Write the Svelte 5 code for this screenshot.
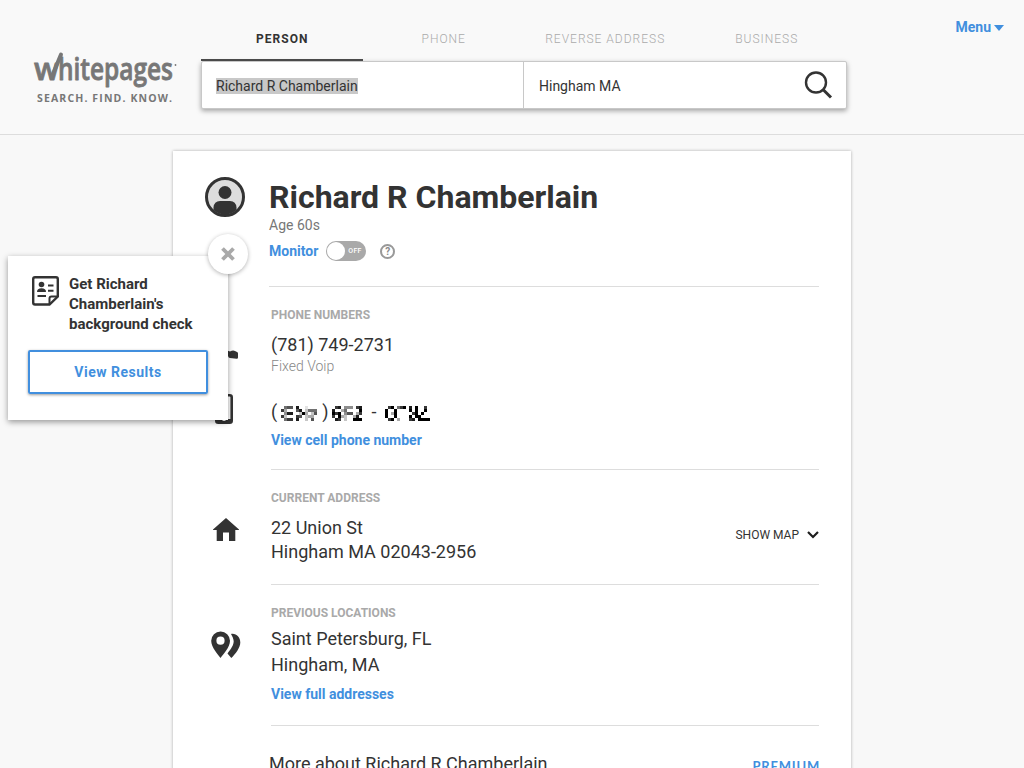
<script lang="ts">
    const tabs = ['Person', 'Phone', 'Reverse Address', 'Business'];

    // Pixelated digits, 0 is blank and 9 is black
    const masked: Record<string, string[]> = {
        area: [
            '056608001000',
            '730006802555',
            '048800293026',
            '720007602330',
            '057708002060',
        ],
        prefix: [
            '0780444078',
            '8003500009',
            '9790466037',
            '7093200380',
            '0870200999',
        ],
        line: [
            '079057908090070',
            '900900009090090',
            '903900000790900',
            '900900009099000',
            '079030007809999',
        ],
    };
</script>

{#snippet digits(rows: string[])}
    <svg class="digits" width={rows[0].length * 3} height="15" shape-rendering="crispEdges">
        {#each rows as row, y}
            {#each row as level, x}
                <rect x={x * 3} y={y * 3} width="3" height="3" fill="#000" fill-opacity={Number(level) / 9} />
            {/each}
        {/each}
    </svg>
{/snippet}

<header>
    <svg class="logo" width="150" height="58" viewBox="0 0 150 58">
        <text class="brand" y="29.500"><tspan x="1" textLength="25" lengthAdjust="spacingAndGlyphs">w</tspan><tspan x="25" textLength="115" lengthAdjust="spacingAndGlyphs">hitepages</tspan></text>
        <path d="M18.500 27.500L28 4.500" />
        <circle cx="142.500" cy="15" r="0.900" />
        <text class="tagline" x="4" y="51.500" textLength="135">SEARCH. FIND. KNOW.</text>
    </svg>
    <div class="finder">
        <nav>
            {#each tabs as tab, i}
                <button class="tab" class:active={i === 0} type="button">{tab}</button>
            {/each}
        </nav>
        <div class="search">
            <div class="field"><span class="selected">Richard R Chamberlain</span></div>
            <div class="field where">
                <span>Hingham MA</span>
                <svg width="30" height="30" viewBox="0 0 30 30" fill="none" stroke="#333">
                    <circle cx="13" cy="12.500" r="10" stroke-width="2.400" />
                    <path d="M20 19.500L28 27.500" stroke-width="3" />
                </svg>
            </div>
        </div>
    </div>
    <button class="menu" type="button">Menu <i></i></button>
</header>

<main>
    <section class="person">
        <svg class="avatar" width="40" height="40" viewBox="0 0 40 40">
            <circle cx="20" cy="20" r="18.500" fill="#ddd" stroke="#333" stroke-width="3" />
            <circle cx="20" cy="15.500" r="6.500" fill="#333" />
            <path d="M8.500 33V30.500Q9 24 15 24H25Q31 24 31.500 30.500V33Q20 42 8.500 33Z" fill="#333" />
        </svg>
        <div class="body">
            <h1>Richard R Chamberlain</h1>
            <div class="age">Age 60s</div>
            <div class="monitor">
                <a href="#monitor">Monitor</a>
                <span class="toggle"><b></b>OFF</span>
                <span class="help">?</span>
            </div>
        </div>
    </section>

    <section class="phones">
        <div class="icons">
            <svg width="28" height="12" viewBox="0 0 28 12">
                <path d="M2 10Q-1 3 5 2Q14 0 20 2.500Q23 1 25 2L27 3Q28 3.300 28 4.500V8.500Q28 10 26.500 9.800L20 9Q18.500 9 18 7L17.500 5Q13 4 9 5L8 9Z" fill="#333" />
            </svg>
            <svg width="18" height="30" viewBox="0 0 18 30">
                <rect x="1.300" y="1.300" width="15.400" height="27.400" rx="2" fill="none" stroke="#333" stroke-width="2.600" />
                <path d="M1 25H17V29H1Z" fill="#333" />
                <path d="M7.500 26.500H10.500" stroke="#fff" />
            </svg>
        </div>
        <div class="body">
            <h2>Phone Numbers</h2>
            <p class="number">(781) 749-2731</p>
            <p class="kind">Fixed Voip</p>
            <p class="number hidden">
                <span>(</span>{@render digits(masked.area)}<span>)</span>{@render digits(masked.prefix)}<span class="dash">-</span>{@render digits(masked.line)}
            </p>
            <a href="#cell">View cell phone number</a>
        </div>
    </section>

    <section class="current">
        <svg class="house" width="26" height="23" viewBox="0 0 26 23">
            <path d="M13 0L26 11.500V12H22.300V23H16V14.500H10V23H3.700V12H0V11.500Z" fill="#333" />
        </svg>
        <div class="body">
            <h2>Current Address</h2>
            <div class="address">
                <p>22 Union St<br />Hingham MA 02043-2956</p>
                <button class="map" type="button">
                    Show map
                    <svg width="12" height="8" viewBox="0 0 12 8">
                        <path d="M1 1L6 6L11 1" fill="none" stroke="#1e1e1e" stroke-width="2.200" />
                    </svg>
                </button>
            </div>
        </div>
    </section>

    <section class="previous">
        <svg class="pins" width="30" height="28" viewBox="0 0 30 28">
            <path fill="#333" fill-rule="evenodd" d="M9.500 0.500A9.300 9.300 0 0 1 19 9.800C19 16 12 24 9.500 27C7 24 0.200 16 0.200 9.800A9.300 9.300 0 0 1 9.500 0.500ZM9.500 5.600A4.100 4.100 0 1 0 9.500 13.800A4.100 4.100 0 1 0 9.500 5.600Z" />
            <path fill="#333" d="M20 3C25 2 29.300 6 29.300 11.500C29.300 16.500 24.500 23 20.300 27L16.500 22.500C18 20 22.500 15.500 22.700 10.500C22.700 8 21.500 5.500 20 3Z" />
        </svg>
        <div class="body">
            <h2>Previous Locations</h2>
            <p>Saint Petersburg, FL<br />Hingham, MA</p>
            <a href="#addresses">View full addresses</a>
        </div>
    </section>

    <div class="more">
        <span>More about Richard R Chamberlain</span>
        <b>PREMIUM</b>
    </div>
</main>

<aside>
    <button class="close" type="button" aria-label="Close">
        <svg width="14" height="14" viewBox="0 0 14 14">
            <path d="M1.500 1.500L12.500 12.500M12.500 1.500L1.500 12.500" stroke="#a9a9a9" stroke-width="3.800" />
        </svg>
    </button>
    <div class="offer">
        <svg width="27" height="30" viewBox="0 0 27 30" fill="none" stroke="#333" stroke-width="2">
            <path d="M3 1.200H24Q25.800 1.200 25.800 3V20.500L17.500 28.500H3Q1.200 28.500 1.200 26.500V3Q1.200 1.200 3 1.200Z" stroke-width="2.400" />
            <path d="M17.500 28V22.500Q17.500 20.500 19.500 20.500H25.500" />
            <circle cx="9.500" cy="8.500" r="2.800" fill="#333" stroke="none" />
            <path d="M5 16Q5 12.300 9.500 12.300Q14 12.300 14 16Z" fill="#333" stroke="none" />
            <path d="M16 9.500H21.500M16 14.800H21.500M5.500 20H14" />
        </svg>
        <strong>Get Richard Chamberlain's background check</strong>
    </div>
    <button class="results" type="button">View Results</button>
</aside>

<style>
    :global(body) {
        background: #f8f8f8;
        color: #333;
        font-family: Roboto, sans-serif;
        height: 768px;
        overflow: hidden;
    }

    h1, h2, p {
        margin: 0;
    }

    svg {
        display: block;
        flex: none;
    }

    a {
        color: #418fde;
        font-size: 14px;
        font-weight: 700;
        line-height: 16px;
        text-decoration: none;
    }

    button {
        font-family: inherit;
        background: none;
        border: none;
        padding: 0;
        cursor: pointer;
    }

    header {
        box-sizing: border-box;
        height: 135px;
        display: flex;
        align-items: flex-start;
        padding: 0 20px 0 33px;
        background: #f9f9f9;
        border-bottom: 1px solid #ddd;
    }

    .logo {
        margin: 50px 18px 0 0;
        fill: #777;
        overflow: visible;

        path {
            stroke: #777;
            stroke-width: 4;
            stroke-linecap: round;
        }
    }

    .brand {
        font: 600 30px "Open Sans", sans-serif;
        stroke: #777;
        stroke-width: 0.8;
        stroke-linejoin: round;
    }

    .tagline {
        font: 700 10.5px "Open Sans", sans-serif;
    }

    .finder {
        width: 646px;
    }

    nav {
        display: grid;
        grid-template-columns: repeat(4, 1fr);
        height: 41px;
        margin-top: 20px;
    }

    .tab {
        box-sizing: border-box;
        padding: 0 0 1px 1px;
        color: #aaa;
        font-size: 12px;
        font-weight: 300;
        letter-spacing: 1px;
        text-transform: uppercase;
        border-bottom: 2px solid transparent;

        &.active {
            color: #333;
            font-weight: 700;
            border-color: #4a4a4a;
        }
    }

    .search {
        box-sizing: border-box;
        display: flex;
        height: 48px;
        background: #fff;
        border: 1px solid #c8c8c8;
        border-radius: 2px;
        box-shadow: 0 2px 5px rgba(0, 0, 0, 0.35);
        font-size: 14px;
    }

    .field {
        box-sizing: border-box;
        width: 321px;
        display: flex;
        align-items: center;
        padding: 2px 14px 0;
    }

    .selected {
        background: #c8c8c8;
    }

    .where {
        justify-content: space-between;
        padding-left: 15px;
        padding-right: 11px;
        border-left: 1px solid #c8c8c8;

        svg {
            margin-top: -3px;
        }
    }

    .menu {
        margin: 19px 0 0 auto;
        display: flex;
        align-items: center;
        gap: 3px;
        color: #418fde;
        font-size: 14px;
        font-weight: 700;

        i {
            border: 5px solid transparent;
            border-top: 6px solid #418fde;
            border-bottom: none;
            margin-top: 2px;
        }
    }

    main {
        box-sizing: border-box;
        width: 678px;
        height: 640px;
        margin: 16px auto 0;
        padding: 0 32px;
        background: #fff;
        box-shadow: 0 0 3px rgba(0, 0, 0, 0.3);
    }

    section {
        display: flex;
    }

    .body {
        box-sizing: border-box;
        margin-left: auto;
        width: 548px;
        border-bottom: 1px solid #ddd;
    }

    .person .body {
        width: 550px;
        height: 136px;
        padding-top: 27px;
    }

    .avatar {
        margin-top: 26px;
    }

    h1 {
        font-size: 32px;
        line-height: 38px;
    }

    .age {
        margin-top: 1px;
        color: #777;
        font-size: 14px;
        line-height: 16px;
    }

    .monitor {
        display: flex;
        align-items: center;
        margin-top: 8px;
    }

    .toggle {
        box-sizing: border-box;
        display: flex;
        align-items: center;
        gap: 3px;
        width: 40px;
        height: 20px;
        margin: 0 14px 0 8px;
        padding-left: 1px;
        border-radius: 10px;
        background: #a9a9a9;
        color: #fff;
        font-size: 7px;
        font-weight: 500;
        letter-spacing: 0.3px;

        b {
            width: 18px;
            height: 18px;
            border-radius: 50%;
            background: #fff;
        }
    }

    .help {
        box-sizing: border-box;
        width: 15px;
        height: 15px;
        border: 2px solid #999;
        border-radius: 50%;
        color: #888;
        font-size: 10px;
        font-weight: 700;
        line-height: 11px;
        text-align: center;
    }

    h2 {
        color: #a9a9a9;
        font-size: 12px;
        line-height: 14px;
        font-weight: 700;
        text-transform: uppercase;
    }

    .body > p, .address p {
        font-size: 18px;
        line-height: 24px;
    }

    .phones .body {
        height: 183px;
        padding-top: 21px;

        h2 {
            margin-bottom: 11px;
        }

        .kind {
            color: #888;
            font-size: 14px;
            font-weight: 300;
            line-height: 18px;
        }
    }

    .icons {
        display: flex;
        flex-direction: column;
        align-items: center;
        margin: 62px 0 0 5px;
        gap: 33px;
    }

    .hidden {
        display: flex;
        align-items: center;
        margin: 25px 0 6px;

        .digits {
            margin: 2px 5px 0 4px;
        }

        .digits:nth-of-type(2) {
            margin-right: 0;
        }

        .dash {
            margin: 0 5px 0 9px;
        }
    }

    .current .body {
        height: 115px;
        padding-top: 21px;
    }

    .house {
        margin: 48px 0 0 8px;
    }

    .address {
        display: flex;
        justify-content: space-between;
        align-items: flex-start;
        margin-top: 11px;
    }

    .map {
        display: flex;
        align-items: center;
        gap: 8px;
        margin-top: 12px;
        color: #333;
        font-size: 12px;
        text-transform: uppercase;
    }

    .previous .body {
        height: 141px;
        padding-top: 21px;

        p {
            line-height: 26px;
            margin: 6px 0 8px;
        }

        a {
            display: block;
        }
    }

    .pins {
        margin: 46px 0 0 6px;
    }

    .more {
        display: flex;
        justify-content: space-between;
        align-items: flex-start;
        margin-left: 64px;
        padding-top: 27px;
        font-size: 18px;
        line-height: 21px;

        b {
            color: #418fde;
            font: 700 13px/16px Lato, sans-serif;
            letter-spacing: 0.8px;
            margin: 5px -1px 0 0;
        }
    }

    aside {
        position: absolute;
        left: 8px;
        top: 256px;
        box-sizing: border-box;
        width: 220px;
        height: 164px;
        padding: 18px 20px;
        background: #fff;
        box-shadow: 0 2px 6px rgba(0, 0, 0, 0.4);
    }

    .close {
        position: absolute;
        right: -20px;
        top: -22px;
        display: flex;
        align-items: center;
        justify-content: center;
        width: 40px;
        height: 40px;
        border-radius: 50%;
        background: #fff;
        box-shadow: 0 1px 4px rgba(0, 0, 0, 0.3);
    }

    .offer {
        display: flex;
        gap: 10px;
        padding-left: 4px;

        svg {
            margin-top: 2px;
        }

        strong {
            font-size: 15px;
            line-height: 20px;
        }
    }

    .results {
        box-sizing: border-box;
        width: 180px;
        height: 44px;
        margin-top: 16px;
        border: 2px solid #418fde;
        border-radius: 2px;
        box-shadow: 0 1px 3px rgba(0, 0, 0, 0.4);
        color: #418fde;
        font-size: 14px;
        font-weight: 700;
        letter-spacing: 0.5px;
    }
</style>
